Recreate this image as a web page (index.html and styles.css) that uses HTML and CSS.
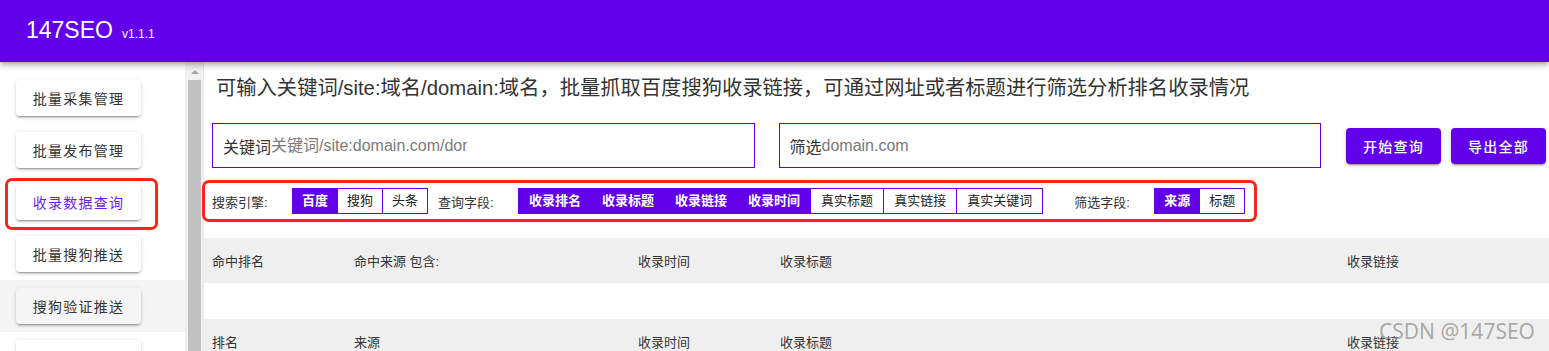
FILE: index.html
```html
<!DOCTYPE html>
<html lang="zh-CN">
<head>
<meta charset="utf-8">
<title>147SEO</title>
<link rel="stylesheet" href="styles.css">
</head>
<body>
<header class="topbar">
  <span class="brand">147SEO</span><span class="version">v1.1.1</span>
</header>
<div class="main">
  <nav class="sidebar">
    <div class="nav-item"><button class="nav-btn">批量采集管理</button></div>
    <div class="nav-item"><button class="nav-btn">批量发布管理</button></div>
    <div class="nav-item marked"><button class="nav-btn active">收录数据查询</button></div>
    <div class="nav-item"><button class="nav-btn">批量搜狗推送</button></div>
    <div class="nav-item hover"><button class="nav-btn">搜狗验证推送</button></div>
    <div class="nav-item"><button class="nav-btn"></button></div>
  </nav>
  <div class="scrollbar"><div class="scroll-arrow"></div><div class="scroll-thumb"></div></div>
  <section class="content">
    <p class="desc">可输入关键词/site:域名/domain:域名，批量抓取百度搜狗收录链接，可通过网址或者标题进行筛选分析排名收录情况</p>
    <div class="query-row">
      <label class="field"><span class="field-label">关键词</span><input class="field-input" type="text" placeholder="关键词/site:domain.com/domain:domain.com"></label>
      <label class="field field-gap"><span class="field-label">筛选</span><input class="field-input" type="text" placeholder="domain.com"></label>
      <button class="primary-btn first">开始查询</button>
      <button class="primary-btn">导出全部</button>
    </div>
    <div class="options-row">
      <span class="opt-label">搜索引擎:</span>
      <div class="toggle-group">
        <span class="toggle on">百度</span><span class="toggle">搜狗</span><span class="toggle">头条</span>
      </div>
      <span class="opt-label gap-s">查询字段:</span>
      <div class="toggle-group wide">
        <span class="toggle on">收录排名</span><span class="toggle on">收录标题</span><span class="toggle on">收录链接</span><span class="toggle on">收录时间</span><span class="toggle">真实标题</span><span class="toggle">真实链接</span><span class="toggle">真实关键词</span>
      </div>
      <span class="opt-label gap-l">筛选字段:</span>
      <div class="toggle-group">
        <span class="toggle on">来源</span><span class="toggle">标题</span>
      </div>
    </div>
    <div class="table">
      <div class="trow grey">
        <span>命中排名</span><span>命中来源 包含:</span><span>收录时间</span><span>收录标题</span><span>收录链接</span>
      </div>
      <div class="spacer"></div>
      <div class="trow grey">
        <span>排名</span><span>来源</span><span>收录时间</span><span>收录标题</span><span>收录链接</span>
      </div>
    </div>
    <div class="watermark">CSDN @147SEO</div>
  </section>
</div>
</body>
</html>
```

FILE: styles.css
```css
* { box-sizing: border-box; }
html, body {
  margin: 0;
  height: 351px;
  overflow: hidden;
  background: #fff;
  font-family: "Liberation Sans", "Noto Sans CJK SC", sans-serif;
  color: #333;
}
.topbar {
  position: relative;
  z-index: 2;
  height: 62px;
  background: #6200ea;
  color: #fff;
  padding: 19px 0 0 26px;
  display: flex;
  align-items: baseline;
  box-shadow: 0 2px 4px -1px rgba(0,0,0,.2), 0 4px 5px 0 rgba(0,0,0,.14), 0 1px 10px 0 rgba(0,0,0,.12);
}
.brand { font-size: 23px; line-height: 23px; }
.version { font-size: 12px; margin-left: 9px; }
.main {
  display: flex;
  height: 289px;
}
.sidebar {
  width: 185px;
  flex: none;
  padding-top: 10px;
}
.nav-item {
  height: 52px;
  padding: 8px 0 8px 16px;
}
.nav-item.hover { background: #f4f4f4; }
.nav-item.marked { position: relative; }
.nav-item.marked::after {
  content: "";
  position: absolute;
  left: 5px;
  top: 2px;
  width: 147px;
  height: 46px;
  border: 3px solid #ff2218;
  border-radius: 7px;
}
.nav-btn {
  width: 125px;
  height: 36px;
  border: none;
  border-radius: 4px;
  background: #fff;
  font-family: "Liberation Sans", "Noto Sans CJK SC", sans-serif;
  font-size: 14px;
  letter-spacing: 1.25px;
  color: #333;
  padding: 0;
  box-shadow: 0 3px 1px -2px rgba(0,0,0,.2), 0 2px 2px 0 rgba(0,0,0,.14), 0 1px 5px 0 rgba(0,0,0,.12);
}
.nav-item.hover .nav-btn { background: #f5f5f5; }
.nav-btn.active { color: #6a1ef0; }
.scrollbar {
  width: 19px;
  flex: none;
  background: #f1f1f1;
  border-right: 1px solid #e6e6e6;
  padding-top: 8px;
}
.scroll-arrow {
  width: 0;
  height: 0;
  margin-left: 6px;
  border-left: 4px solid transparent;
  border-right: 4px solid transparent;
  border-bottom: 4px solid #a3a3a3;
}
.scroll-thumb {
  margin: 6px 0 0 3px;
  width: 13px;
  height: 300px;
  background: #c1c1c1;
}
.content {
  position: relative;
  flex: 1;
  padding: 10px 3px 0 8px;
}
.desc {
  margin: 0 0 0 4px;
  font-size: 20.3px;
  line-height: 32px;
  color: #333;
}
.query-row {
  display: flex;
  align-items: center;
  margin-top: 19px;
  height: 45px;
}
.field {
  flex: 1;
  height: 45px;
  border: 1px solid #6200ea;
  display: flex;
  align-items: center;
  padding-left: 10px;
  font-size: 16px;
  overflow: hidden;
}
.field-gap { margin-left: 24px; }
.field-label { color: #333; }
.field-input {
  width: 196px;
  border: none;
  outline: none;
  padding: 0;
  font-family: "Liberation Sans", "Noto Sans CJK SC", sans-serif;
  font-size: 16px;
  color: #333;
  background: transparent;
}
.field-input::placeholder { color: #7a7a7a; }
.primary-btn {
  width: 95px;
  height: 36px;
  margin-left: 10px;
  border: none;
  border-radius: 4px;
  background: #6200ea;
  color: #fff;
  font-family: "Liberation Sans", "Noto Sans CJK SC", sans-serif;
  font-size: 14px;
  font-weight: 500;
  letter-spacing: 1.25px;
  padding: 0;
  box-shadow: 0 3px 1px -2px rgba(0,0,0,.2), 0 2px 2px 0 rgba(0,0,0,.14), 0 1px 5px 0 rgba(0,0,0,.12);
}
.primary-btn.first { margin-left: 25px; }
.options-row {
  display: inline-flex;
  align-items: center;
  margin: 12px 0 0 -10px;
  height: 42px;
  padding: 0 9px 0 7px;
  border: 3px solid #ff2218;
  border-radius: 7px;
  font-size: 13px;
}
.opt-label {
  width: 80px;
  color: #333;
}
.gap-s { margin-left: 10px; }
.gap-l { margin-left: 31px; }
.toggle-group { display: flex; }
.toggle {
  height: 26px;
  line-height: 24px;
  padding: 0 9px;
  border: 1px solid #6200ea;
  background: #fff;
  color: #222;
}
.toggle-group.wide .toggle { padding: 0 10px; }
.toggle + .toggle { margin-left: -1px; }
.toggle.on {
  background: #6200ea;
  color: #fff;
  font-weight: 700;
}
.table {
  margin: 16px -3px 0 -8px;
  font-size: 13px;
}
.trow {
  display: grid;
  grid-template-columns: 142px 284px 142px 567px 1fr;
  align-items: center;
  height: 45px;
  padding-left: 8px;
}
.trow.grey { background: #efefef; }
.spacer { height: 36px; }
.watermark {
  position: absolute;
  right: 14px;
  bottom: 6px;
  font-family: "Noto Sans", sans-serif;
  font-size: 21px;
  color: rgba(130,130,130,.65);
}
```
